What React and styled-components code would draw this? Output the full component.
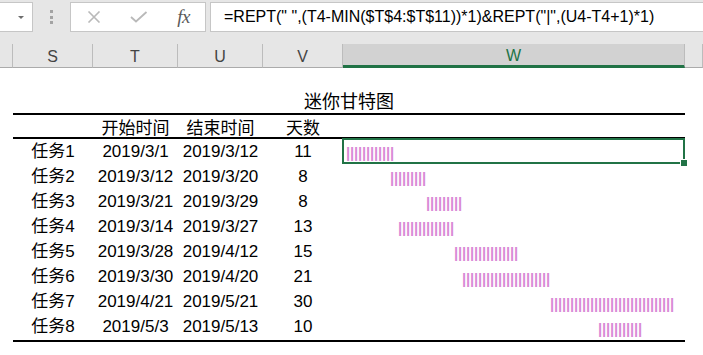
import React from "react";
import styled, { createGlobalStyle } from "styled-components";

const GlobalStyle = createGlobalStyle`
    * { box-sizing: border-box; }
    body {
        margin: 0;
        background: #ffffff;
        font-family: "Liberation Sans", "Noto Sans CJK SC", sans-serif;
        overflow: hidden;
    }
`;

const BAR = "#d98ad6";
const GREEN = "#217346";

const FormulaBar = styled.div`
    display: flex;
    align-items: flex-start;
    height: 44px;
    padding-top: 2px;
    background: #e6e6e6;
`;

const NameBox = styled.div`
    width: 33px;
    height: 30px;
    background: #fff;
    border: 1px solid #c6c6c6;
    border-left: none;
    display: flex;
    align-items: center;
    justify-content: flex-end;
    padding-right: 8px;
`;

const Caret = styled.span`
    width: 0;
    height: 0;
    border-left: 3.5px solid transparent;
    border-right: 3.5px solid transparent;
    border-top: 3.5px solid #6d6d6d;
`;

const Grip = styled.div`
    width: 37px;
    height: 30px;
    display: flex;
    flex-direction: column;
    align-items: center;
    justify-content: center;
    gap: 2.5px;

    span {
        width: 3px;
        height: 3px;
        background: #a3a3a3;
    }
`;

const ButtonBox = styled.div`
    width: 136px;
    height: 30px;
    background: #fff;
    border: 1px solid #c6c6c6;
    display: grid;
    grid-template-columns: 45px 45px 45px;
    align-items: center;
    justify-items: center;
`;

const Fx = styled.span`
    font-family: "Liberation Serif", serif;
    font-style: italic;
    font-size: 19px;
    color: #5a5a5a;
    line-height: 1;
    margin-top: -2px;
    letter-spacing: -0.5px;
`;

const FormulaInput = styled.div`
    flex: 1;
    height: 30px;
    margin-left: 4px;
    background: #fff;
    border: 1px solid #c6c6c6;
    border-right: none;
    padding-left: 13px;
    display: flex;
    align-items: center;
    font-size: 16px;
    color: #000;
    white-space: pre;
`;

const HeadRow = styled.div`
    display: grid;
    grid-template-columns: 13px 80px 85px 85px 80px 342px 1fr;
    height: 24px;
    background: #e6e6e6;
`;

const ColHead = styled.div`
    display: flex;
    align-items: center;
    justify-content: center;
    padding-top: 2px;
    font-size: 16px;
    color: ${(p) => (p.$active ? GREEN : "#444")};
    background: ${(p) => (p.$active ? "#d2d2d2" : "#e6e6e6")};
    border-right: 1px solid #bcbcbc;
    border-bottom: ${(p) => (p.$active ? `3px solid ${GREEN}` : "1px solid #ababab")};
`;

const Table = styled.div`
    margin-left: 13px;
    width: 672px;
    font-size: 17px;
    color: #000;
    border-bottom: 2px solid #000;
`;

const Title = styled.div`
    height: 47px;
    display: flex;
    align-items: flex-end;
    justify-content: center;
    font-size: 18px;
    line-height: 18px;
    padding-bottom: 2px;
    border-bottom: 2px solid #000;
`;

const Row = styled.div`
    display: grid;
    grid-template-columns: 80px 85px 85px 80px 342px;
    height: ${(p) => (p.$head ? "24px" : "25.1px")};
    align-items: center;
    padding-top: ${(p) => (p.$head ? "4px" : "0")};
    border-bottom: ${(p) => (p.$head ? "2px solid #000" : "none")};
`;

const Cell = styled.div`
    text-align: center;
    white-space: nowrap;
    line-height: 20px;
`;

const GanttCell = styled.div`
    position: relative;
    height: 100%;
    display: flex;
    align-items: center;
    padding-left: 3px;
`;

const Bar = styled.span`
    margin-left: ${(p) => p.$offset * 4}px;
    font-family: "Liberation Sans", sans-serif;
    font-size: 15px;
    font-weight: 700;
    letter-spacing: -0.2px;
    line-height: 1;
    color: ${BAR};
    white-space: pre;
    margin-top: 2px;
`;

const Selection = styled.div`
    position: absolute;
    top: -1px;
    left: -1px;
    right: 0;
    bottom: 0;
    border: 2px solid ${GREEN};

    &::after {
        content: "";
        position: absolute;
        right: -4px;
        bottom: -4px;
        width: 6px;
        height: 6px;
        background: ${GREEN};
        border-left: 1px solid #fff;
        border-top: 1px solid #fff;
    }
`;

const tasks = [
    ["任务1", "2019/3/1", "2019/3/12", 11],
    ["任务2", "2019/3/12", "2019/3/20", 8],
    ["任务3", "2019/3/21", "2019/3/29", 8],
    ["任务4", "2019/3/14", "2019/3/27", 13],
    ["任务5", "2019/3/28", "2019/4/12", 15],
    ["任务6", "2019/3/30", "2019/4/20", 21],
    ["任务7", "2019/4/21", "2019/5/21", 30],
    ["任务8", "2019/5/3", "2019/5/13", 10],
];

const toDay = (s) => {
    const [y, m, d] = s.split("/").map(Number);
    return Date.UTC(y, m - 1, d) / 86400000;
};

const first = Math.min(...tasks.map((t) => toDay(t[1])));

const XIcon = () => (
    <svg width="16" height="12" viewBox="0 0 16 12">
        <path d="M2.5 0.5 L13.5 11.5 M13.5 0.5 L2.5 11.5" stroke="#b9b9b9" strokeWidth="1.6" fill="none" />
    </svg>
);

const CheckIcon = () => (
    <svg width="18" height="12" viewBox="0 0 18 12">
        <path d="M1 6 L6 10.5 L16.5 1" stroke="#b9b9b9" strokeWidth="1.8" fill="none" />
    </svg>
);

const columns = ["S", "T", "U", "V", "W"];

export default function App() {
    return (
        <>
            <GlobalStyle />
            <FormulaBar>
                <NameBox>
                    <Caret />
                </NameBox>
                <Grip>
                    <span />
                    <span />
                    <span />
                </Grip>
                <ButtonBox>
                    <XIcon />
                    <CheckIcon />
                    <Fx>fx</Fx>
                </ButtonBox>
                <FormulaInput>{`=REPT(" ",(T4-MIN($T$4:$T$11))*1)&REPT("|",(U4-T4+1)*1)`}</FormulaInput>
            </FormulaBar>
            <HeadRow>
                <ColHead />
                {columns.map((c) => (
                    <ColHead key={c} $active={c === "W"}>
                        {c}
                    </ColHead>
                ))}
                <ColHead />
            </HeadRow>
            <Table>
                <Title>迷你甘特图</Title>
                <Row $head>
                    <Cell />
                    <Cell>开始时间</Cell>
                    <Cell>结束时间</Cell>
                    <Cell>天数</Cell>
                    <Cell />
                </Row>
                {tasks.map(([name, start, end, days], i) => {
                    const offset = toDay(start) - first;
                    const count = toDay(end) - toDay(start) + 1;
                    return (
                        <Row key={name}>
                            <Cell>{name}</Cell>
                            <Cell>{start}</Cell>
                            <Cell>{end}</Cell>
                            <Cell>{days}</Cell>
                            <GanttCell>
                                <Bar $offset={offset}>{"|".repeat(count)}</Bar>
                                {i === 0 && <Selection />}
                            </GanttCell>
                        </Row>
                    );
                })}
            </Table>
        </>
    );
}
